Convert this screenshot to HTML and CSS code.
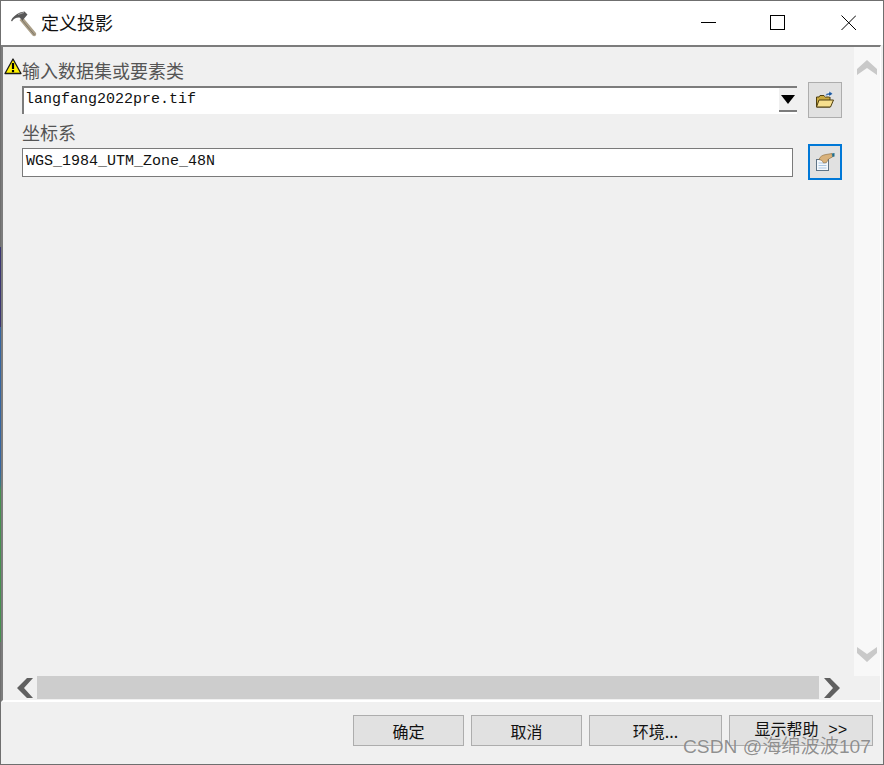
FILE: index.html
```html
<!DOCTYPE html>
<html lang="zh">
<head>
<meta charset="utf-8">
<title>定义投影</title>
<link rel="stylesheet" href="styles.css">
</head>
<body>
<div class="window">
  <header class="titlebar">
    <svg class="app-icon" width="27" height="27" viewBox="0 0 27 27">
      <path d="M9.5 10 L22.5 25.5 C23.5 26.5 25 26.3 25.8 25.4 C26.5 24.5 26.3 23.4 25.6 22.6 L13 7.5 Z" fill="#ab9f88"/>
      <path d="M12 10 L24.5 25" stroke="#7d7668" stroke-width="1" fill="none"/>
      <path d="M1 10.5 C2.5 7 6 4.5 10 2.5 L14.5 1.5 L17.5 4.5 L12.5 10.5 L9.5 7.5 C6.5 7.2 3.5 8.5 2 11.5 Z" fill="#575757"/>
      <path d="M8 4.5 L14 2.5" stroke="#a0a0a0" stroke-width="1" fill="none"/>
    </svg>
    <h1 class="title">定义投影</h1>
    <div class="controls">
      <svg width="15" height="16" viewBox="0 0 15 16"><path d="M0 7.5H15" stroke="#000" stroke-width="1"/></svg>
      <svg width="15" height="16" viewBox="0 0 15 16"><rect x="0.5" y="0.5" width="14" height="14" fill="none" stroke="#000"/></svg>
      <svg class="ctl-close" width="15" height="16" viewBox="0 0 15 16"><path d="M0.5 0.5L15 15M15 0.5L0.5 15" stroke="#000" stroke-width="1"/></svg>
    </div>
  </header>

  <main class="main">
    <div class="upper">
      <form class="form">
        <svg class="warn" width="18" height="17" viewBox="0 0 18 17">
          <path d="M9 1 L17 15.5 H1 Z" fill="#fff200" stroke="#1a1a1a" stroke-width="1.3" stroke-linejoin="round"/>
          <path d="M9 5 V11" stroke="#000" stroke-width="2.2"/>
          <rect x="7.9" y="12" width="2.2" height="2.2" fill="#000"/>
        </svg>
        <label class="label">输入数据集或要素类</label>
        <div class="row">
          <div class="combo">
            <span class="combo-value">langfang2022pre.tif</span>
            <span class="combo-btn"><span class="caret"></span></span>
          </div>
          <button class="icon-btn" type="button">
            <svg width="20" height="20" viewBox="0 0 20 20">
              <path d="M1.5 7 H4 L5 5.5 H9 L10 7 H15 V17 H1.5 Z" fill="#c9a93f" stroke="#4f3f10" stroke-width="1"/>
              <path d="M1.5 17 L4 10 H18.5 L15.5 17 Z" fill="#f6df8e" stroke="#4f3f10" stroke-width="1"/>
              <path d="M10 6.5 C10.5 4 12 3 14 3 V1 L18 3.8 L14 6.5 V5 C12.5 5 11.5 5.5 10 6.5 Z" fill="#1f5aa0" stroke="#fff" stroke-width="0.5"/>
            </svg>
          </button>
        </div>
        <label class="label label-next">坐标系</label>
        <div class="row">
          <div class="textbox">WGS_1984_UTM_Zone_48N</div>
          <button class="icon-btn icon-btn-focus" type="button">
            <svg width="20" height="20" viewBox="0 0 20 20">
              <rect x="1.5" y="7.5" width="12" height="11" fill="#f4f8fc" stroke="#5f7486"/>
              <path d="M3.5 11H11.5M3.5 13.5H11.5M3.5 16H11.5" stroke="#a9c6e3" stroke-width="1.2"/>
              <path d="M4 7.5 C5 4.5 7.5 3 11 2.5 L17 1.5 L17.5 5 L13.5 7 L11.5 10.5 L8.5 11 L7 8.5 Z" fill="#d9b27c" stroke="#8a6a3c" stroke-width="0.6"/>
              <path d="M17 1.5 L19.5 1 V4.5 L17.5 5 Z" fill="#1f6f8f"/>
            </svg>
          </button>
        </div>
      </form>
      <div class="vscroll">
        <svg width="20" height="16" viewBox="0 0 20 16"><path d="M0 9 L10 0 L20 9 V15 L10 8 L0 15 Z" fill="#c9c9c9"/></svg>
        <svg width="20" height="16" viewBox="0 0 20 16"><path d="M0 0 L10 7 L20 0 V6 L10 15 L0 6 Z" fill="#c9c9c9"/></svg>
      </div>
    </div>
    <div class="hscroll">
      <svg class="harrow" width="16" height="20" viewBox="0 0 16 20"><path d="M16 0 H10 L0 10 L10 20 H16 L7 10 Z" fill="#606060"/></svg>
      <div class="thumb"></div>
      <svg class="harrow" width="16" height="20" viewBox="0 0 16 20"><path d="M0 0 H6 L16 10 L6 20 H0 L9 10 Z" fill="#606060"/></svg>
    </div>
  </main>

  <footer class="footer">
    <button class="btn btn-std" type="button">确定</button>
    <button class="btn btn-std" type="button">取消</button>
    <button class="btn btn-env" type="button">环境...</button>
    <button class="btn btn-help" type="button">显示帮助 &gt;&gt;</button>
  </footer>
  <div class="watermark">CSDN @海绵波波107</div>
</div>
</body>
</html>
```

FILE: styles.css
```css
* { box-sizing: border-box; }
html, body { margin: 0; padding: 0; background: #f0f0f0; }
body { font-family: "Noto Sans CJK SC", "Liberation Sans", sans-serif; color: #111; overflow: hidden; }

.window {
  position: relative;
  width: 884px;
  height: 765px;
  display: flex;
  flex-direction: column;
  background: #f0f0f0;
  border-top: 1px solid #6f6f6f;
  border-right: 1px solid #6f6f6f;
  border-bottom: 1px solid #6f6f6f;
  padding-left: 1px;
}
.window::before {
  content: "";
  position: absolute;
  left: 0;
  top: -1px;
  bottom: -1px;
  width: 1px;
  background: linear-gradient(to bottom,
    #6f6f6f 0, #6f6f6f 247px,
    #3a3570 247px, #3a3570 327px,
    #35659f 327px, #35659f 470px,
    #3a7a80 485px,
    #46904f 490px, #46904f 642px,
    #6f6f6f 642px);
}

.titlebar {
  height: 44px;
  flex: none;
  display: flex;
  align-items: center;
  background: #fff;
  padding-left: 9px;
  padding-right: 27px;
}
.app-icon { flex: none; }
.title { margin: -3px 0 0 4px; font-size: 18px; font-weight: 400; line-height: 24px; color: #111; }
.controls { margin-left: auto; display: flex; align-items: center; gap: 54px; }
.ctl-close { margin-left: 2px; }

.main {
  width: 880px;
  height: 657px;
  flex: none;
  display: flex;
  flex-direction: column;
  border-top: 2px solid #7c7c7c;
  border-left: 2px solid #7c7c7c;
  border-right: 1px solid #fff;
  border-bottom: 2px solid #fff;
  background: #f0f0f0;
}
.upper { flex: 1; display: flex; min-height: 0; }
.form { position: relative; flex: 1; padding: 13px 0 0 19px; }
.warn { position: absolute; left: 1px; top: 11px; }
.label { display: block; height: 22px; font-size: 18px; line-height: 20px; color: #555; padding-left: 0; }
.label-next { margin-top: 4px; }

.row { width: 820px; height: 36px; display: flex; align-items: center; justify-content: space-between; }

.combo {
  width: 775px;
  height: 28px;
  display: flex;
  background: #fff;
  border-left: 2px solid #7c7c7c;
}
.combo-value {
  flex: 1;
  border-top: 2px solid #7c7c7c;
  font: 15px/23px "Liberation Mono", monospace;
  color: #111;
  padding-left: 1px;
}
.combo-btn {
  width: 18px;
  height: 26px;
  flex: none;
  background: #f0f0f0;
  border-top: 2px solid #7c7c7c;
  border-bottom: 2px solid #7c7c7c;
  display: flex;
  justify-content: center;
  padding-top: 7px;
}
.caret {
  width: 0;
  height: 0;
  border-left: 7px solid transparent;
  border-right: 7px solid transparent;
  border-top: 9px solid #000;
}

.textbox {
  width: 771px;
  height: 29px;
  margin-top: 1px;
  background: #fff;
  border: 1px solid #7a7a7a;
  font: 15px/25px "Liberation Mono", monospace;
  color: #111;
  padding-left: 3px;
}

.icon-btn {
  width: 34px;
  height: 36px;
  padding: 0;
  display: flex;
  align-items: center;
  justify-content: center;
  background: #e1e1e1;
  border: 1px solid #adadad;
}
.icon-btn-focus { border: 2px solid #0078d7; }

.vscroll {
  width: 26px;
  flex: none;
  background: #f8f8f8;
  display: flex;
  flex-direction: column;
  align-items: center;
  justify-content: space-between;
  padding: 13px 0 13px;
}

.hscroll {
  height: 24px;
  flex: none;
  display: flex;
  align-items: center;
  padding-left: 14px;
  background: #f0f0f0;
}
.harrow { flex: none; }
.thumb { width: 782px; height: 23px; margin: 0 5px 0 4px; background: #cdcdcd; align-self: flex-start; }

.footer {
  flex: 1;
  display: flex;
  justify-content: flex-end;
  align-items: flex-start;
  gap: 7px;
  padding: 13px 10px 0 0;
  background: #f0f0f0;
}
.btn {
  height: 31px;
  padding: 0;
  background: #e1e1e1;
  border: 1px solid #adadad;
  font-family: "Noto Sans CJK SC", "Liberation Sans", sans-serif;
  font-size: 16px;
  line-height: 26px;
  color: #111;
}
.btn-std { width: 111px; }
.btn-env { width: 133px; }
.btn-help { width: 144px; font-family: "Liberation Mono", "Noto Sans CJK SC", monospace; }

.watermark {
  position: absolute;
  left: 683px;
  top: 734px;
  font-family: "Liberation Sans", "Noto Sans CJK SC", sans-serif;
  font-size: 19.2px;
  line-height: 24px;
  white-space: nowrap;
  color: rgba(110, 110, 110, 0.75);
  text-shadow: 0 0 1px rgba(255, 255, 255, 0.6);
}
```
